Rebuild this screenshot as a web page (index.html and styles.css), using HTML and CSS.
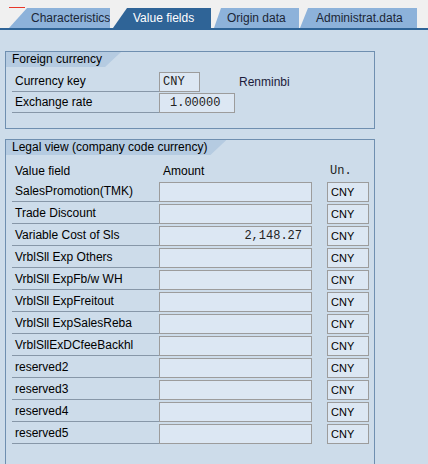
FILE: index.html
```html
<!DOCTYPE html>
<html lang="en">
<head>
    <meta charset="UTF-8">
    <title>Value fields</title>
    <link rel="stylesheet" href="styles.css">
</head>
<body>
    <div class="tabstrip">
        <div class="marker"></div>
        <div class="tabs">
            <div class="tab tab-char">Characteristics</div>
            <div class="tab tab-value active">Value fields</div>
            <div class="tab tab-origin">Origin data</div>
            <div class="tab tab-admin">Administrat.data</div>
        </div>
    </div>

    <div class="content">
        <div class="group">
            <div class="group-title">Foreign currency</div>
            <div class="rows foreign-rows">
                <div class="row">
                    <span class="label">Currency key</span>
                    <span class="field mono key-field">CNY</span>
                    <span class="desc">Renminbi</span>
                </div>
                <div class="row">
                    <span class="label">Exchange rate</span>
                    <span class="field mono rate-field">1.00000</span>
                </div>
            </div>
        </div>

        <div class="group legal">
            <div class="group-title">Legal view (company code currency)</div>
            <div class="rows legal-rows">
                <div class="row head">
                    <span class="head-label">Value field</span>
                    <span class="head-amount">Amount</span>
                    <span class="head-unit mono">Un.</span>
                </div>
                <!-- value field rows -->
                <div class="row"><span class="label">SalesPromotion(TMK)</span><span class="field amount"></span><span class="field unit">CNY</span></div>
                <div class="row"><span class="label">Trade Discount</span><span class="field amount"></span><span class="field unit">CNY</span></div>
                <div class="row"><span class="label">Variable Cost of Sls</span><span class="field amount mono">2,148.27</span><span class="field unit">CNY</span></div>
                <div class="row"><span class="label">VrblSll Exp Others</span><span class="field amount"></span><span class="field unit">CNY</span></div>
                <div class="row"><span class="label">VrblSll ExpFb/w WH</span><span class="field amount"></span><span class="field unit">CNY</span></div>
                <div class="row"><span class="label">VrblSll ExpFreitout</span><span class="field amount"></span><span class="field unit">CNY</span></div>
                <div class="row"><span class="label">VrblSll ExpSalesReba</span><span class="field amount"></span><span class="field unit">CNY</span></div>
                <div class="row"><span class="label">VrblSllExDCfeeBackhl</span><span class="field amount"></span><span class="field unit">CNY</span></div>
                <div class="row"><span class="label">reserved2</span><span class="field amount"></span><span class="field unit">CNY</span></div>
                <div class="row"><span class="label">reserved3</span><span class="field amount"></span><span class="field unit">CNY</span></div>
                <div class="row"><span class="label">reserved4</span><span class="field amount"></span><span class="field unit">CNY</span></div>
                <div class="row"><span class="label">reserved5</span><span class="field amount"></span><span class="field unit">CNY</span></div>
            </div>
        </div>
    </div>
</body>
</html>
```

FILE: styles.css
```css
body {
    margin: 0;
    width: 428px;
    height: 464px;
    overflow: hidden;
    font-family: "Liberation Sans", Arial, sans-serif;
    font-size: 12px;
    color: #000;
    background-color: #cddcea;
}
.mono {
    font-family: "Liberation Mono", "Courier New", monospace;
    color: #222;
}

/* tab strip */
.tabstrip {
    background-color: #f0f0f0;
    padding-top: 7px;
    border-bottom: 2px solid #2f6497;
}
.marker {
    margin-left: 9px;
    width: 16px;
    height: 1px;
    background-color: #e8382a;
}
.tabs {
    display: flex;
    height: 20px;
    padding-left: 9px;
}
.tab {
    box-sizing: border-box;
    height: 20px;
    line-height: 20px;
    white-space: nowrap;
    color: #1b2636;
    background-color: #8db2da;
    clip-path: polygon(14px 0, 100% 0, 100% 100%, 0 100%);
}
.tab.active {
    color: #fff;
    background-color: #2f6497;
}
.tab-char {
    width: 101px;
    padding-left: 22px;
    clip-path: polygon(18px 0, 100% 0, 100% 100%, 0 100%);
}
.tab-value {
    width: 98px;
    margin-left: 3px;
    padding-left: 20px;
}
.tab-origin {
    width: 85px;
    margin-left: 3px;
    padding-left: 13px;
    clip-path: polygon(7px 0, 100% 0, 100% 100%, 0 100%);
}
.tab-admin {
    width: 117px;
    margin-left: 1px;
    padding-left: 16px;
    clip-path: polygon(8px 0, 100% 0, 100% 100%, 0 100%);
}

/* group boxes */
.content {
    padding: 21px 0 0 5px;
}
.group {
    width: 368px;
    border: 1px solid #6f8fb0;
}
.group.legal {
    margin-top: 10px;
}
.group-title {
    width: fit-content;
    height: 15px;
    line-height: 15px;
    padding: 0 19px 0 6px;
    background-color: #b5cbe1;
    clip-path: polygon(0 0, 100% 0, calc(100% - 16px) 100%, 0 100%);
}
.foreign-rows {
    padding: 4px 0 15px 6px;
}
.legal-rows {
    padding: 3px 0 40px 6px;
}
.row {
    display: flex;
    align-items: flex-end;
    height: 22px;
}
.foreign-rows .row {
    height: 21px;
}
.label {
    box-sizing: border-box;
    width: 147px;
    height: 20px;
    line-height: 19px;
    padding-left: 3px;
    border-bottom: 1px solid #8797a8;
}
.field {
    box-sizing: border-box;
    height: 20px;
    line-height: 18px;
    border: 1px solid #9c9c9c;
    background-color: #dce7f3;
}
.key-field {
    width: 41px;
    padding-left: 3px;
}
.rate-field {
    width: 76px;
    padding-left: 10px;
}
.desc {
    margin-left: 39px;
    line-height: 20px;
    color: #1b1b3a;
}
.amount {
    width: 153px;
    padding-right: 9px;
    text-align: right;
}
.unit {
    width: 42px;
    margin-left: 15px;
    padding-left: 3px;
    font-size: 11px;
}

/* column headings */
.head span {
    line-height: 17px;
}
.head-label {
    width: 147px;
    padding-left: 3px;
    box-sizing: border-box;
}
.head-amount {
    width: 168px;
    padding-left: 4px;
    box-sizing: border-box;
}
.head-unit {
    padding-left: 3px;
}
```
